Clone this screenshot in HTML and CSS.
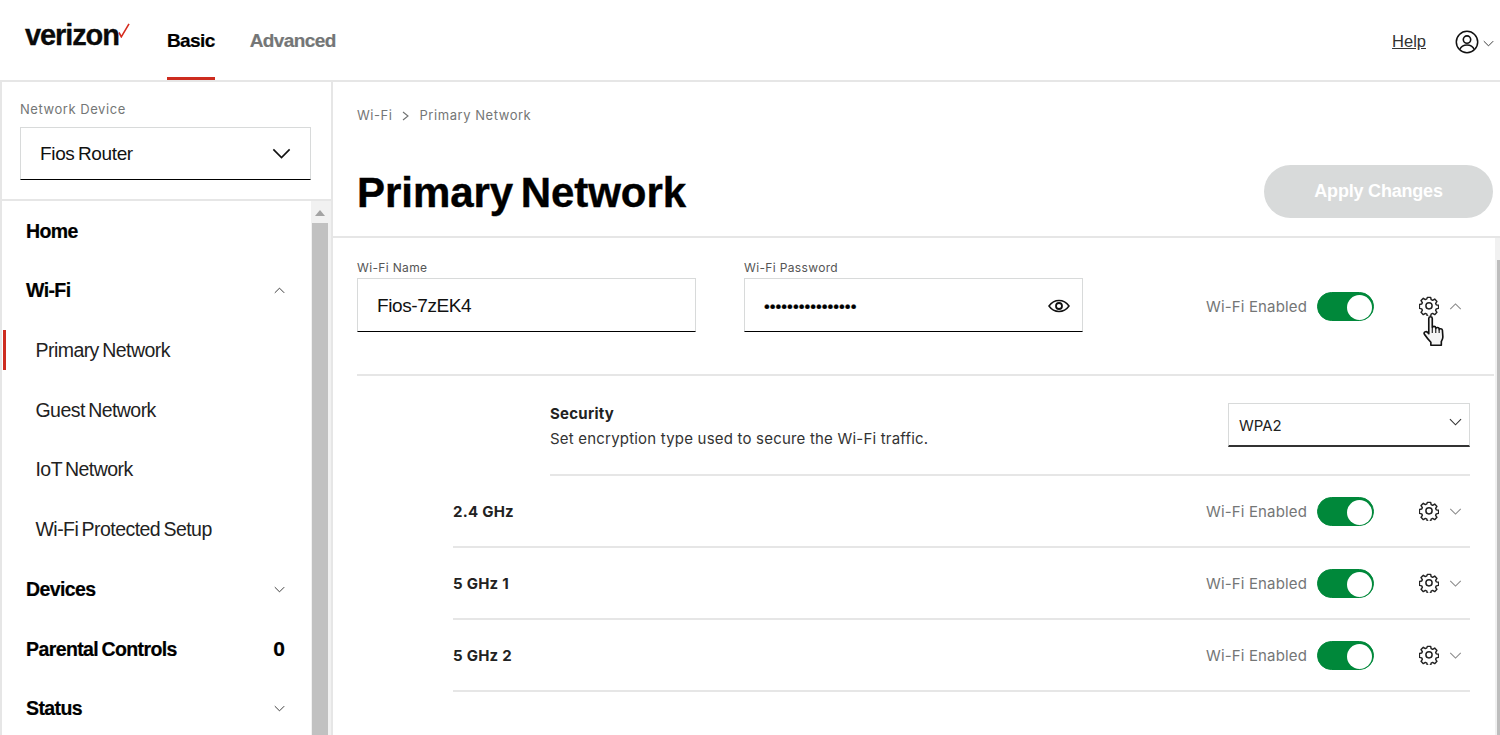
FILE: index.html
```html
<!DOCTYPE html>
<html lang="en">
<head>
<meta charset="utf-8">
<title>Primary Network</title>
<link rel="stylesheet" href="styles.css">
</head>
<body>
<svg class="sprite" width="0" height="0" aria-hidden="true">
  <symbol id="gear" viewBox="0 0 20 20">
    <path fill="none" stroke="currentColor" stroke-width="1.5" stroke-linejoin="round" d="M8.3 1.2h3.4l.5 2.4 1.5.7 2.1-1.3 2.3 2.4-1.3 2.1.6 1.5 2.4.5v3.2l-2.4.5-.6 1.5 1.3 2.1-2.3 2.4-2.1-1.3-1.5.7-.5 2.4H8.3l-.5-2.4-1.5-.7-2.1 1.3-2.3-2.4 1.3-2.1-.6-1.5-2.4-.5V8.700l2.4-.5.6-1.5-1.3-2.1 2.3-2.400 2.1 1.300 1.5-.7z" transform="translate(.2 .2) scale(.98 .96)"/>
    <circle cx="10" cy="9.8" r="3.1" fill="none" stroke="currentColor" stroke-width="1.5"/>
  </symbol>
  <symbol id="chev" viewBox="0 0 14 8">
    <path fill="none" stroke="currentColor" stroke-width="1.2" d="M1 1l6 6 6-6"/>
  </symbol>
</svg>

<header class="topbar">
  <div class="brand"><span class="brand-word">verizon</span><svg class="brand-check" viewBox="0 0 12 15" width="12" height="15"><path fill="none" stroke="#d52b1e" stroke-width="1.6" d="M1 9.500l2.300 4.300L11 .8"/></svg></div>
  <nav class="tabs">
    <a class="tab tab-active">Basic</a>
    <a class="tab">Advanced</a>
  </nav>
  <div class="top-right">
    <a class="help">Help</a>
    <svg class="user" viewBox="0 0 24 24" width="24" height="24"><circle cx="12" cy="12" r="10.7" fill="none" stroke="#111" stroke-width="1.5"/><circle cx="12" cy="9.600" r="3.700" fill="none" stroke="#111" stroke-width="1.600"/><path fill="none" stroke="#111" stroke-width="1.500" d="M4.800 19.500c1.400-3.400 3.800-4.600 7.200-4.600s5.800 1.200 7.200 4.600"/></svg>
    <svg class="user-chev"><use href="#chev"/></svg>
  </div>
</header>

<div class="shell">
  <aside class="sidebar">
    <div class="device">
      <div class="device-label">Network Device</div>
      <div class="device-select"><span>Fios Router</span><svg class="device-chev"><use href="#chev"/></svg></div>
    </div>
    <div class="nav-wrap">
      <ul class="nav">
        <li class="nav-item nav-top">Home</li>
        <li class="nav-item nav-top">Wi-Fi<svg class="nav-chev up"><use href="#chev"/></svg></li>
        <li class="nav-item nav-sub nav-current">Primary Network</li>
        <li class="nav-item nav-sub">Guest Network</li>
        <li class="nav-item nav-sub">IoT Network</li>
        <li class="nav-item nav-sub">Wi-Fi Protected Setup</li>
        <li class="nav-item nav-top">Devices<svg class="nav-chev"><use href="#chev"/></svg></li>
        <li class="nav-item nav-top">Parental Controls<span class="nav-count">0</span></li>
        <li class="nav-item nav-top">Status<svg class="nav-chev"><use href="#chev"/></svg></li>
      </ul>
      <div class="side-scroll">
        <div class="side-arrow"></div>
        <div class="side-thumb"></div>
      </div>
    </div>
  </aside>

  <main class="main">
    <div class="page-head">
      <div class="crumbs"><span>Wi-Fi</span><svg class="crumb-sep" viewBox="0 0 8 10" width="8" height="10"><path fill="none" stroke="#6f7171" stroke-width="1.100" d="M1 1l5 4-5 4"/></svg><span>Primary Network</span></div>
      <div class="title-row">
        <h1 class="title">Primary Network</h1>
        <button class="apply">Apply Changes</button>
      </div>
    </div>
    <div class="content">
      <section class="primary">
        <div class="field name-field">
          <label class="field-label">Wi-Fi Name</label>
          <div class="input">Fios-7zEK4</div>
        </div>
        <div class="field pass-field">
          <label class="field-label">Wi-Fi Password</label>
          <div class="input pass"><span class="dots">••••••••••••••••</span>
            <svg class="eye" viewBox="0 0 22 14" width="22" height="14"><path fill="none" stroke="#111" stroke-width="1.500" d="M1 7c2.600-3.700 5.900-5.500 10-5.500S18.400 3.300 21 7c-2.600 3.700-5.900 5.500-10 5.500S3.600 10.700 1 7z"/><circle cx="11" cy="7" r="3" fill="none" stroke="#111" stroke-width="1.800"/></svg>
          </div>
        </div>
        <div class="controls controls-main">
          <span class="en-label">Wi-Fi Enabled</span>
          <span class="toggle"><span class="knob"></span></span>
          <svg class="gear"><use href="#gear"/></svg>
          <svg class="row-chev up"><use href="#chev"/></svg>
          <svg class="cursor" viewBox="0 0 22 29" width="24" height="30" preserveAspectRatio="none"><path fill="#f4f4f4" stroke="#111" stroke-width="1.500" stroke-linejoin="round" d="M5.300 2.300c0-2 3.200-2 3.200 0v8.900c.2-1.600 3-1.600 3.200.1v.8c.3-1.500 3-1.400 3.100.3v.8c.4-1.400 2.900-1.200 3 .6l.4 6.300c.1 2-.8 3.400-1.400 4.500v3.600H7.200v-2.800c-1.700-2-4.300-5.300-5.900-7.800-1-1.900 1.500-3.400 3-1.700l1 1.300z"/><path fill="none" stroke="#111" stroke-width="1" d="M8.500 11.500v5M11.700 12.500v4M14.800 13.500v3"/></svg>
        </div>
      </section>
      <section class="details">
        <div class="security">
          <div class="security-text">
            <div class="security-title">Security</div>
            <div class="security-sub">Set encryption type used to secure the Wi-Fi traffic.</div>
          </div>
          <div class="sec-select"><span>WPA2</span><svg class="sec-chev"><use href="#chev"/></svg></div>
        </div>
        <div class="band">
          <span class="band-name">2.4 GHz</span>
          <div class="controls">
            <span class="en-label">Wi-Fi Enabled</span>
            <span class="toggle"><span class="knob"></span></span>
            <svg class="gear"><use href="#gear"/></svg>
            <svg class="row-chev"><use href="#chev"/></svg>
          </div>
        </div>
        <div class="band">
          <span class="band-name">5 GHz 1</span>
          <div class="controls">
            <span class="en-label">Wi-Fi Enabled</span>
            <span class="toggle"><span class="knob"></span></span>
            <svg class="gear"><use href="#gear"/></svg>
            <svg class="row-chev"><use href="#chev"/></svg>
          </div>
        </div>
        <div class="band">
          <span class="band-name">5 GHz 2</span>
          <div class="controls">
            <span class="en-label">Wi-Fi Enabled</span>
            <span class="toggle"><span class="knob"></span></span>
            <svg class="gear"><use href="#gear"/></svg>
            <svg class="row-chev"><use href="#chev"/></svg>
          </div>
        </div>
      </section>
      <div class="main-scroll"><div class="main-thumb"></div></div>
    </div>
  </main>
</div>
</body>
</html>
```
FILE: styles.css
```css
* { box-sizing: border-box; }
html, body { margin: 0; height: 735px; overflow: hidden; background: #fff; }
body { font-family: "Liberation Sans", Arial, sans-serif; color: #000; }
.sprite { position: absolute; }

.topbar { height: 82px; display: flex; align-items: stretch; border-bottom: 2px solid #e6e6e6; }
.brand { width: 167px; padding: 20px 0 0 25px; display: flex; align-items: flex-start; }
.brand-word { font-size: 29px; line-height: 30px; font-weight: 700; letter-spacing: -1.100px; color: #0a0a0a; -webkit-text-stroke: .3px #0a0a0a; }
.brand-check { margin: 3px 0 0 -1px; }
.tabs { display: flex; gap: 35px; }
.tab { display: block; height: 80px; padding-top: 30px; font-size: 19px; line-height: 22px; font-weight: 700; letter-spacing: -.6px; color: #747676; -webkit-text-stroke: .2px currentColor; }
.tab-active { color: #000; border-bottom: 3px solid #cd2c1f; }
.top-right { margin-left: auto; padding: 29px 6px 0 0; display: flex; align-items: flex-start; }
.help { font-size: 16.500px; line-height: 24px; color: #333; text-decoration: underline; margin-right: 1px; }
.user { margin-left: 28px; margin-top: 1px; }
.user-chev { width: 11px; height: 7px; margin: 11px 0 0 4px; color: #333; }

.shell { display: flex; height: 653px; }
.sidebar { width: 333px; flex: none; border-left: 2px solid #e6e6e6; border-right: 2px solid #e6e6e6; display: flex; flex-direction: column; overflow: hidden; }
.device { height: 119px; padding: 19px 20px 0 18px; border-bottom: 2px solid #e6e6e6; }
.device-label { font-family: Inter, sans-serif; font-size: 13px; line-height: 16px; letter-spacing: .55px; color: #747676; }
.device-select { margin-top: 10px; height: 53px; display: flex; align-items: center; justify-content: space-between; padding: 0 19px 0 19px; border: 1px solid #d8dada; border-bottom: 1px solid #000; font-size: 19px; letter-spacing: -.35px; word-spacing: -1.500px; color: #111; }
.device-chev { width: 19px; height: 11px; color: #111; }
.nav-wrap { flex: 1; display: flex; min-height: 0; }
.nav { list-style: none; margin: 0; padding: .4px 0 0; flex: 1; min-width: 0; }
.nav-item { height: 59.700px; display: flex; align-items: center; position: relative; white-space: nowrap; }
.nav-top { padding: 0 26px 0 24px; font-size: 19.500px; font-weight: 700; letter-spacing: -.6px; word-spacing: -1.500px; justify-content: space-between; -webkit-text-stroke: .2px #000; }
.nav-sub { padding-left: 33.500px; font-size: 19.500px; letter-spacing: -.55px; word-spacing: -1.500px; color: #222; }
.nav-current::before { content: ""; position: absolute; left: 1px; top: 9px; width: 3px; height: 40px; background: #cd2c1f; }
.nav-chev { width: 11px; height: 7px; color: #333; }
.nav-chev.up, .row-chev.up { transform: rotate(180deg); }
.nav-count { font-size: 21px; letter-spacing: 0; margin-right: 0; }
.side-scroll { width: 20px; flex: none; background: #f1f1f1; padding: 0 3px 0 1px; }
.side-arrow { width: 0; height: 0; margin: 9px auto 7px; border: 5px solid transparent; border-top: 0; border-bottom: 6px solid #a3a3a3; }
.side-thumb { height: 540px; background: #c1c1c1; }

.main { flex: 1; min-width: 0; display: flex; flex-direction: column; }
.page-head { height: 156px; padding: 0 7px 0 24px; border-bottom: 2px solid #e6e6e6; }
.crumbs { padding-top: 25px; display: flex; align-items: center; font-family: Inter, sans-serif; font-size: 13px; line-height: 16px; letter-spacing: .55px; color: #747676; }
.crumb-sep { margin: 2px 10px 0 9px; }
.title-row { display: flex; justify-content: space-between; align-items: flex-start; margin-top: 42px; }
.title { margin: 5px 0 0; font-size: 42px; line-height: 46px; font-weight: 700; letter-spacing: -.05px; word-spacing: -4px; -webkit-text-stroke: .4px #000; }
.apply { width: 229px; height: 53px; border: 0; border-radius: 27px; background: #d8dada; color: #fff; font: 700 18px "Liberation Sans", Arial, sans-serif; letter-spacing: -.2px; }

.content { flex: 1; position: relative; padding-left: 24px; }
.primary { height: 138px; margin-right: 6px; display: flex; align-items: flex-start; border-bottom: 2px solid #e6e6e6; position: relative; }
.field { padding-top: 22px; }
.name-field { width: 339px; margin-right: 48px; }
.pass-field { width: 339px; }
.field-label { display: block; font-family: Inter, sans-serif; font-size: 12px; line-height: 15px; letter-spacing: .35px; color: #555; margin-bottom: 3px; }
.input { height: 54px; display: flex; align-items: center; padding: 2px 19px 0; border: 1px solid #d8dada; border-bottom: 1px solid #000; font-size: 19px; letter-spacing: -.4px; color: #111; }
.pass { justify-content: space-between; padding-right: 12px; }
.dots { font-size: 16.500px; letter-spacing: 0; color: #000; -webkit-text-stroke: .2px #000; }
.controls { display: flex; align-items: center; margin-left: auto; position: relative; }
.controls-main { position: absolute; right: 32px; top: 53px; }
.en-label { font-family: Inter, sans-serif; font-size: 15px; line-height: 30px; letter-spacing: .15px; color: #747676; position: relative; top: 1px; }
.toggle { width: 57px; height: 29px; margin-left: 10px; border-radius: 15px; background: #00883a; display: block; padding: 2px 2px 2px 29px; border: 1px solid #00883a; }
.knob { display: block; width: 25px; height: 25px; border-radius: 50%; background: #fff; }
.gear { width: 20px; height: 20px; margin-left: 45px; color: #222; }
.row-chev { width: 13px; height: 7px; margin-left: 10px; color: #8a8a8a; }
.cursor { position: absolute; right: 15px; top: 25px; }

.details { padding-left: 96px; padding-right: 30px; }
.security { margin-left: 97px; height: 100px; padding-top: 27px; border-bottom: 2px solid #e6e6e6; display: flex; justify-content: space-between; align-items: flex-start; }
.security-title { font-family: Inter, sans-serif; font-size: 15px; font-weight: 700; line-height: 20px; letter-spacing: .25px; color: #222; margin-top: 1px; }
.security-sub { font-family: Inter, sans-serif; font-size: 15px; line-height: 20px; letter-spacing: .2px; margin-top: 5px; color: #333; }
.sec-select { width: 242px; height: 44px; display: flex; align-items: center; justify-content: space-between; padding: 2px 7px 0 10px; border: 1px solid #d8dada; border-bottom: 2px solid #333; font-family: Inter, sans-serif; font-size: 15px; color: #222; }
.sec-chev { width: 13px; height: 8px; margin-top: -7px; color: #333; }
.band { height: 72px; display: flex; align-items: center; border-bottom: 2px solid #e6e6e6; }
.band .controls { padding-right: 8px; }
.band-name { font-family: Inter, sans-serif; font-size: 15px; font-weight: 700; letter-spacing: .25px; color: #222; }
.main-scroll { position: absolute; right: 0; top: 0; bottom: 0; width: 5px; background: #f1f1f1; padding: 22px 0 0 2px; }
.main-thumb { height: 100%; background: #bdbdbd; }
```
